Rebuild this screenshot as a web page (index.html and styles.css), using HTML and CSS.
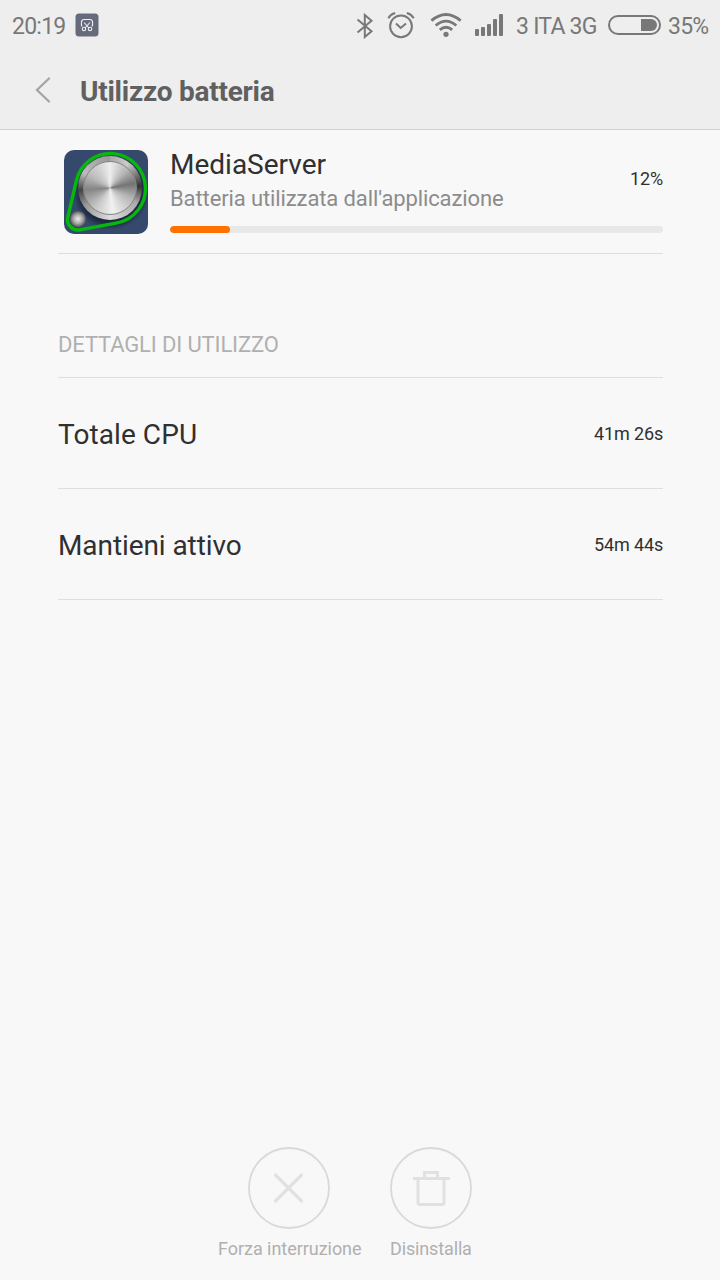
FILE: index.html
```html
<!DOCTYPE html>
<html lang="it">
<head>
<meta charset="utf-8">
<title>Utilizzo batteria</title>
<link rel="stylesheet" href="styles.css">
</head>
<body>
<div class="screen">
  <header class="top">
    <div class="status">
      <span class="clock">20:19</span>
      <svg class="shot" width="24" height="24" viewBox="0 0 24 24" fill="none"><rect x=".5" y=".5" width="23" height="23" rx="3.5" fill="#666b7c"/><g stroke="#eef0f5" stroke-width="1.1"><path d="M7 13.5Q6 12 6.500 8.500 7 6.500 9 6.500H15Q17 6.500 17.500 8.500 18 12 17 13.500"/><path d="M9 9.500L14 15M15 9.500L10 15"/><circle cx="9" cy="16" r="1.700"/><circle cx="15" cy="16" r="1.700"/></g></svg>
      <svg class="bt" width="18" height="26" viewBox="0 0 18 26" fill="none" stroke="#787878" stroke-width="2"><path d="M1.500 6.500L15.500 18.200 8.800 24V2L15.500 7.800 1.500 19.500"/></svg>
      <svg class="alarm" width="28" height="28" viewBox="0 0 28 28" fill="none" stroke="#787878" stroke-width="2"><circle cx="14" cy="15.300" r="10.900"/><path d="M9 12.500L13.700 17 19 12.500M1.300 7.200Q3.500 3.200 8.200 2M26.700 7.200Q24.500 3.200 19.800 2"/></svg>
      <svg class="wifi" width="32" height="26" viewBox="0 0 32 26" fill="none" stroke="#787878" stroke-width="2.800"><path d="M1.400 8.600Q16-3.700 30.600 8.600M5.700 13.500Q16 4.700 26.300 13.500M9.800 17.900Q16 12.700 22.200 17.900"/><circle cx="16" cy="22.300" r="2.600" fill="#787878" stroke="none"/></svg>
      <svg class="signal" width="28" height="22" viewBox="0 0 28 22" fill="#787878"><rect x="0" y="15" width="4" height="7" rx="1"/><rect x="6" y="13" width="4" height="9" rx="1"/><rect x="12" y="10" width="4" height="12" rx="1"/><rect x="18" y="5" width="4" height="17" rx="1"/><rect x="24" y="0" width="4" height="22" rx="1"/></svg>
      <span class="carrier">3 ITA 3G</span>
      <svg class="battery" width="53" height="20" viewBox="0 0 53 20"><rect x="1" y="1" width="51" height="18" rx="9" fill="none" stroke="#787878" stroke-width="2"/><path d="M33 4H43A6 6 0 0 1 43 16H33Z" fill="#787878"/></svg>
      <span class="level">35%</span>
    </div>
    <div class="titlebar">
      <svg class="back" width="16" height="26" viewBox="0 0 16 26" fill="none" stroke="#a5a5a5" stroke-width="2.300" stroke-linecap="round"><path d="M14 1.500L2 13 14 24.500"/></svg>
      <h1 class="title">Utilizzo batteria</h1>
    </div>
  </header>
  <main class="content">
    <section class="app">
      <div class="app-icon">
        <svg class="belt" width="84" height="84" viewBox="0 0 84 84">
          <defs><radialGradient id="shade"><stop offset=".8" stop-color="#152033" stop-opacity=".8"/><stop offset="1" stop-color="#152033" stop-opacity="0"/></radialGradient></defs>
          <circle cx="47" cy="42" r="38" fill="url(#shade)"/>
          <path d="M12.400 30.500A35 35 0 1 1 52.900 72.900L15.900 79.800A10.500 10.500 0 0 1 3.800 67.100Z" fill="none" stroke="#06b80b" stroke-width="3.400"/>
        </svg>
        <div class="knob knob-big"><div class="knob-face"></div></div>
        <div class="knob knob-small"></div>
      </div>
      <div class="app-body">
        <div class="app-info">
          <div><div class="app-name">MediaServer</div><div class="app-desc">Batteria utilizzata dall'applicazione</div></div>
          <span class="value percent">12%</span>
        </div>
        <div class="track"><div class="fill"></div></div>
      </div>
    </section>
    <h2 class="section">DETTAGLI DI UTILIZZO</h2>
    <div class="row"><span class="label cpu">Totale CPU</span><span class="value">41m 26s</span></div>
    <div class="row"><span class="label awake">Mantieni attivo</span><span class="value">54m 44s</span></div>
  </main>
  <footer class="actions">
    <div class="action">
      <svg width="82" height="82" viewBox="0 0 82 82" fill="none"><circle cx="41" cy="41" r="40" stroke="#d9d9d9" stroke-width="1.800"/><path d="M27.500 28L53.500 54M53.500 28L27.500 54" stroke="#e1e1e1" stroke-width="3.200" stroke-linecap="round"/></svg>
      <span class="caption stop">Forza interruzione</span>
    </div>
    <div class="action">
      <svg width="82" height="82" viewBox="0 0 82 82" fill="none"><circle cx="41" cy="41" r="40" stroke="#d9d9d9" stroke-width="1.800"/><path d="M23 31.500H60M34.500 31V25.500H47.500V31M28 31.500V55.500Q28 57.500 30 57.500H52Q54 57.500 54 55.500V31.500" stroke="#e1e1e1" stroke-width="3"/></svg>
      <span class="caption remove">Disinstalla</span>
    </div>
  </footer>
</div>
</body>
</html>
```
FILE: styles.css
```css
* { box-sizing: border-box; }
body { margin: 0; background: #f8f8f8; font-family: Roboto, sans-serif; }
.screen { width: 720px; height: 1280px; display: flex; flex-direction: column; }
.top { height: 130px; background: #eee; border-bottom: 1px solid #cfcfcf; }
.status { height: 52px; padding: 0 12px; display: flex; align-items: center; color: #787878; font-size: 23px; line-height: 28px; letter-spacing: -.75px; white-space: nowrap; }
.status span { padding-top: 2px; }
.status svg { flex: none; }
.clock { width: 63px; }
.bt { margin-left: auto; }
.alarm { margin: 0 15px 3px 13px; }
.wifi { margin-right: 13px; margin-bottom: 3px; }
.signal { margin-right: 13px; margin-bottom: 2px; }
.carrier { width: 80px; }
.battery { margin: 0 7px 2px 12px; }
.shot { margin-bottom: 2px; }
.level { width: 40px; }
.titlebar { height: 77px; padding-left: 35px; display: flex; align-items: center; }
.back { margin-bottom: 1px; }
.title { margin: 2px 0 0 29px; font-size: 28px; line-height: 34px; font-weight: 700; letter-spacing: -.25px; color: #606060; }
.content { flex: 1; padding: 0 57px 0 58px; }
.app { height: 124px; padding: 20px 0 0 6px; display: flex; border-bottom: 1px solid #dedede; }
.app-icon { position: relative; width: 84px; height: 84px; border-radius: 10px; overflow: hidden; background: #34496b; margin-right: 22px; }
.belt { display: block; }
.knob { position: absolute; border-radius: 50%; }
.knob-big { left: 14px; top: 6px; width: 64px; height: 64px; padding: 5px; background: conic-gradient(#a7a7a7, #ccc 10%, #333 24%, #aaa 33%, #ddd 50%, #999 65%, #444 74%, #bbb 83%, #999); }
.knob-face { height: 54px; border-radius: 50%; border: 1px solid #858585; background: conic-gradient(#eee, #b5b5b5 12%, #747474 22%, #b5b5b5 32%, #f1f1f1 48%, #c8c8c8 60%, #858585 74%, #bbb 84%, #d5d5d5 93%, #eee); }
.knob-small { left: 6px; top: 61px; width: 16px; height: 16px; background: radial-gradient(#ededed, #aaa 40%, #555 72%); }
.app-body { flex: 1; }
.app-info { height: 77px; display: flex; justify-content: space-between; margin-top: -2px; }
.app-name { font-size: 28px; line-height: 34px; color: #303030; }
.app-desc { font-size: 22px; line-height: 34px; letter-spacing: -.11px; color: #8c8c8c; }
.value { font-size: 18px; line-height: 22px; letter-spacing: -.13px; margin-right: -.13px; color: #303030; }
.percent { margin-top: 20px; }
.track { height: 7px; margin-top: 1px; border-radius: 4px; background: #e8e8e8; overflow: hidden; }
.fill { width: 60px; height: 7px; border-radius: 4px; background: #ff7200; }
.section { height: 124px; margin: 0; padding-top: 77px; font-size: 22px; line-height: 28px; letter-spacing: -.14px; font-weight: 400; color: #b0b0b0; border-bottom: 1px solid #dedede; }
.row { height: 111px; padding-top: 2px; display: flex; align-items: center; justify-content: space-between; border-bottom: 1px solid #dedede; }
.label { font-size: 28px; line-height: 34px; color: #303030; padding-top: 2px; }
.cpu { letter-spacing: .08px; }
.awake { letter-spacing: -.08px; }
.actions { height: 134px; padding-left: 218px; display: flex; gap: 28px; }
.action { display: flex; flex-direction: column; align-items: flex-start; color: #b0b0b0; font-size: 18px; }
.action svg { display: block; margin: 1px auto 0 0; }
.action:first-child svg { margin-left: 30px; }
.caption { line-height: 22px; margin-top: 9px; white-space: nowrap; }
.stop { width: 144px; letter-spacing: -.04px; }
.remove { letter-spacing: -.14px; }
```
